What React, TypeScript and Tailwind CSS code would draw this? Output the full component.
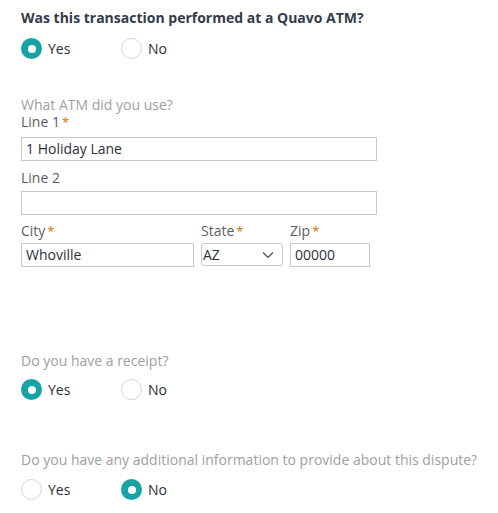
import React from 'react';

function Radio({ label, checked }: { label: string; checked?: boolean }) {
  return (
    <div className="flex items-center w-[100px]">
      {checked ? (
        <span className="w-[21px] h-[21px] rounded-full bg-[#17a2a6] flex items-center justify-center shrink-0">
          <span className="w-[8px] h-[8px] rounded-full bg-white" />
        </span>
      ) : (
        <span className="w-[21px] h-[21px] rounded-full border border-[#cfd3da] bg-white shrink-0" />
      )}
      <span className="ml-[6px] text-[14px] leading-[20px] text-[#2b2f3a]">{label}</span>
    </div>
  );
}

function Label({ text, required }: { text: string; required?: boolean }) {
  return (
    <div className="text-[14px] leading-[17px] text-[#5e5e5e]">
      {text}
      {required && <span className="ml-[2px] text-[13px] font-semibold text-[#d48a2c]">*</span>}
    </div>
  );
}

export default function App() {
  return (
    <div className="w-[498px] h-[513px] bg-white pl-[21px] pt-[8px] font-['Open_Sans',sans-serif]">
      <h2 className="text-[14px] leading-[20px] font-bold text-[#323c4b]">
        Was this transaction performed at a Quavo ATM?
      </h2>
      <div className="flex mt-[10px]">
        <Radio label="Yes" checked />
        <Radio label="No" />
      </div>

      <div className="mt-[37px] text-[14px] leading-[17px] text-[#a0a0a0]">What ATM did you use?</div>
      <Label text="Line 1" required />
      <div className="mt-[6px] w-[356px] h-[24px] border border-[#c6cad0] px-[4px] text-[14px] leading-[21px] text-[#2b2f3a]">
        1 Holiday Lane
      </div>
      <div className="mt-[8px]">
        <Label text="Line 2" />
      </div>
      <div className="mt-[5px] w-[356px] h-[24px] border border-[#c6cad0]" />

      <div className="flex mt-[7px]">
        <div className="w-[180px]">
          <Label text="City" required />
          <div className="mt-[3px] w-[173px] h-[24px] border border-[#c6cad0] px-[4px] text-[14px] leading-[21px] text-[#2b2f3a]">
            Whoville
          </div>
        </div>
        <div className="w-[89px]">
          <Label text="State" required />
          <div className="mt-[3px] w-[82px] h-[23px] border border-[#c6cad0] rounded-[3px] flex items-center justify-between pl-[1px] pr-[8px] text-[14px] text-[#2b2f3a]">
            <span>AZ</span>
            <svg width="12" height="8" viewBox="0 0 12 8" fill="none">
              <path d="M1 1.5L6 6.5L11 1.5" stroke="#444" strokeWidth="1.2" />
            </svg>
          </div>
        </div>
        <div>
          <Label text="Zip" required />
          <div className="mt-[3px] w-[80px] h-[24px] border border-[#c6cad0] px-[4px] text-[14px] leading-[21px] text-[#2b2f3a]">
            00000
          </div>
        </div>
      </div>

      <div className="mt-[85px] text-[14px] leading-[17px] text-[#a0a0a0]">Do you have a receipt?</div>
      <div className="flex mt-[10px]">
        <Radio label="Yes" checked />
        <Radio label="No" />
      </div>

      <div className="mt-[51px] text-[14px] leading-[17px] text-[#a0a0a0] whitespace-nowrap">
        Do you have any additional information to provide about this dispute?
      </div>
      <div className="flex mt-[11px]">
        <Radio label="Yes" />
        <Radio label="No" checked />
      </div>
    </div>
  );
}
